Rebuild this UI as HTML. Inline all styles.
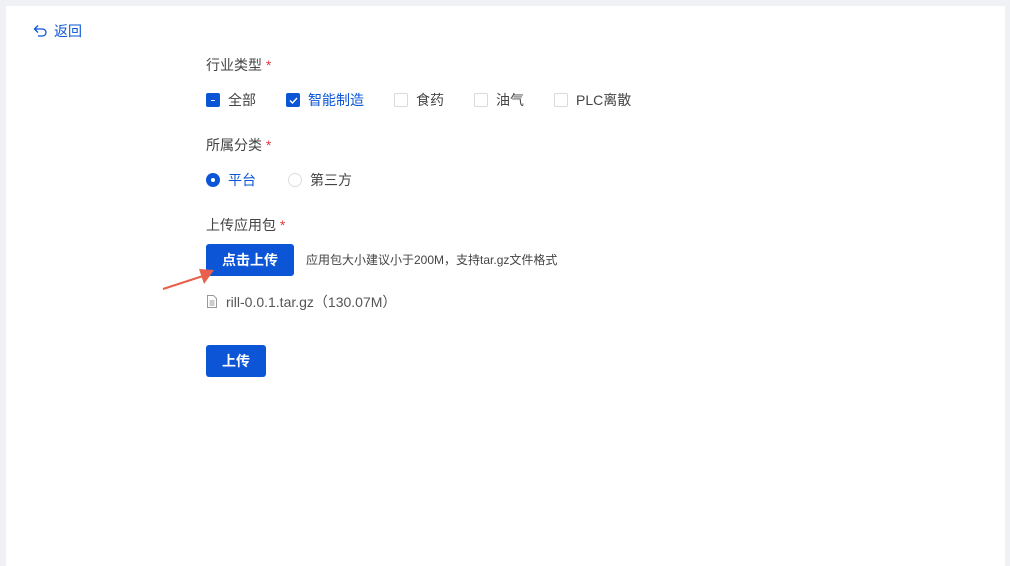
<!DOCTYPE html>
<html><head><meta charset="utf-8"><style>
body{margin:0;width:1010px;height:548px;background:#f0f1f4;font-family:"Liberation Sans","Noto Sans CJK SC",sans-serif;position:relative;overflow:hidden}
.card{position:absolute;left:6px;top:6px;width:999px;height:560px;background:#fff}
.a{position:absolute;white-space:nowrap;font-size:14px;color:#444;line-height:20px}
.star{color:#e63b3b}
.cb{position:absolute;width:14px;height:14px;border:1px solid #d9d9d9;border-radius:2px;box-sizing:border-box;background:#fff}
.cb.on{background:#0b55d6;border-color:#0b55d6}
.btn{position:absolute;background:#0b55d6;color:#fff;font-size:14px;border-radius:3px;text-align:center;font-weight:bold}
</style></head><body>
<div class="card"></div>
<svg style="position:absolute;left:33px;top:24px" width="16" height="14" viewBox="0 0 16 14"><path d="M5 1.5L1.5 5 5 8.5M1.5 5H9.5a3.5 3.5 0 0 1 0 7H5" fill="none" stroke="#0b55d6" stroke-width="1.3"/></svg>
<div class="a" style="left:54px;top:21px;color:#0b55d6">返回</div>

<div class="a" style="left:206px;top:55px">行业类型 <span class="star">*</span></div>
<div class="cb on" style="left:206px;top:93px"><div style="position:absolute;left:4px;top:5.5px;width:4px;height:1.4px;background:#fff"></div></div>
<div class="a" style="left:228px;top:90px">全部</div>
<div class="cb on" style="left:286px;top:93px"><svg style="position:absolute;left:1px;top:1px" width="11" height="11" viewBox="0 0 11 11"><path d="M2 5.5L4.5 8 9 3" fill="none" stroke="#fff" stroke-width="1.4"/></svg></div>
<div class="a" style="left:308px;top:90px;color:#0b55d6">智能制造</div>
<div class="cb" style="left:394px;top:93px"></div>
<div class="a" style="left:416px;top:90px">食药</div>
<div class="cb" style="left:474px;top:93px"></div>
<div class="a" style="left:496px;top:90px">油气</div>
<div class="cb" style="left:554px;top:93px"></div>
<div class="a" style="left:576px;top:90px">PLC离散</div>

<div class="a" style="left:206px;top:135px">所属分类 <span class="star">*</span></div>
<div style="position:absolute;left:206px;top:173px;width:14px;height:14px;border-radius:50%;background:#0b55d6"><div style="position:absolute;left:5px;top:5px;width:4px;height:4px;border-radius:50%;background:#fff"></div></div>
<div class="a" style="left:228px;top:170px;color:#0b55d6">平台</div>
<div style="position:absolute;left:288px;top:173px;width:14px;height:14px;border-radius:50%;border:1px solid #ddd;box-sizing:border-box"></div>
<div class="a" style="left:310px;top:170px">第三方</div>

<div class="a" style="left:206px;top:215px">上传应用包 <span class="star">*</span></div>
<div class="btn" style="left:206px;top:244px;width:88px;height:32px;line-height:32px">点击上传</div>
<div class="a" style="left:306px;top:251px;font-size:12px;line-height:18px">应用包大小建议小于200M，支持tar.gz文件格式</div>
<svg style="position:absolute;left:207px;top:295px" width="10" height="13" viewBox="0 0 10 13"><path d="M0.5 0.5H6.5L9.5 3.5V12.5H0.5Z M2.5 6H7.5M2.5 8H7.5M2.5 10H7.5" fill="none" stroke="#999" stroke-width="1"/></svg>
<div class="a" style="left:226px;top:292px;color:#555">rill-0.0.1.tar.gz（130.07M）</div>

<div class="btn" style="left:206px;top:345px;width:60px;height:32px;line-height:32px">上传</div>

<svg style="position:absolute;left:155px;top:262px" width="70" height="35" viewBox="0 0 70 35"><path d="M8 27L48 14" stroke="#e8604c" stroke-width="2"/><path d="M59 8L44 7 49 22Z" fill="#e8604c"/></svg>
</body></html>
